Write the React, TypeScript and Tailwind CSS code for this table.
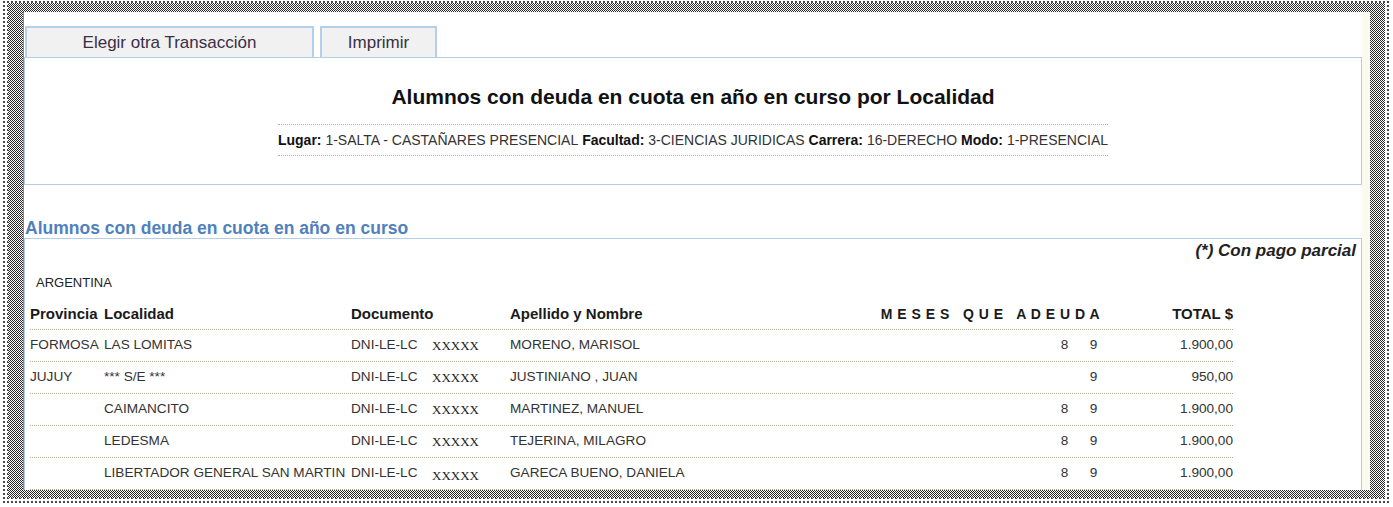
import React from 'react'

interface Row {
  prov: string
  loc: string
  name: string
  months: string[]
  total: string
  low?: boolean
}

const ROWS: Row[] = [
  { prov: 'FORMOSA', loc: 'LAS LOMITAS', name: 'MORENO, MARISOL', months: ['8', '9'], total: '1.900,00' },
  { prov: 'JUJUY', loc: '*** S/E ***', name: 'JUSTINIANO , JUAN', months: ['', '9'], total: '950,00' },
  { prov: '', loc: 'CAIMANCITO', name: 'MARTINEZ, MANUEL', months: ['8', '9'], total: '1.900,00' },
  { prov: '', loc: 'LEDESMA', name: 'TEJERINA, MILAGRO', months: ['8', '9'], total: '1.900,00' },
  { prov: '', loc: 'LIBERTADOR GENERAL SAN MARTIN', name: 'GARECA BUENO, DANIELA', months: ['8', '9'], total: '1.900,00', low: true },
]

const GRID = 'grid grid-cols-[74px_247px_81px_78px_350px_250px_123px] items-center'

const App: React.FC = () => {
  return (
    <div className="w-[1393px] h-[507px] bg-white overflow-hidden font-['Liberation_Sans',Arial,sans-serif] text-[#333]">
      {/* halftone shadow frame */}
      <div className="ml-[2px] w-[1389px] h-[504px] bg-[radial-gradient(#444_0.7px,transparent_0.9px)] bg-[length:4px_4px] pl-[6px] pt-[3px]">
        <div className="w-[1377px] h-[495px] bg-[repeating-conic-gradient(#262626_0_25%,#fff_0_50%)] bg-[length:2px_2px] pl-[15px] pt-[9px] pr-[15px] pb-[8px]">
          <div className="flex h-full bg-white border-l border-[#8c8c8c]">
            <div className="w-[1338px] flex flex-col">
              {/* action tabs */}
              <div className="flex gap-[6px] pl-[1px] mt-[14px]">
                <button className="w-[289px] h-[31px] bg-[#f1f1f1] border-2 border-b-0 border-[#b3cfea] text-[17px] text-[#3a2f45] font-['Liberation_Sans',Arial,sans-serif]">
                  Elegir otra Transacción
                </button>
                <button className="w-[117px] h-[31px] bg-[#f1f1f1] border-2 border-b-0 border-[#b3cfea] text-[17px] text-[#3a2f45] font-['Liberation_Sans',Arial,sans-serif]">
                  Imprimir
                </button>
              </div>

              {/* report header */}
              <div className="h-[129px] border border-[#b4cde8] flex flex-col items-center">
                <h1 className="mt-[27px] text-[21px] leading-[24px] font-bold text-[#111]">
                  Alumnos con deuda en cuota en año en curso por Localidad
                </h1>
                <div className="mt-[15px] h-[32px] flex items-center border-y border-dotted border-[#b0b08c] text-[14px] text-[#333] whitespace-nowrap">
                  <b className="text-[#111]">Lugar:</b>&nbsp;1-SALTA - CASTAÑARES PRESENCIAL&nbsp;
                  <b className="text-[#111]">Facultad:</b>&nbsp;3-CIENCIAS JURIDICAS&nbsp;
                  <b className="text-[#111]">Carrera:</b>&nbsp;16-DERECHO&nbsp;
                  <b className="text-[#111]">Modo:</b>&nbsp;1-PRESENCIAL
                </div>
              </div>

              {/* section */}
              <h2 className="mt-[33px] text-[17.5px] leading-[20px] font-bold text-[#4f81bd] pl-[1px]">
                Alumnos con deuda en cuota en año en curso
              </h2>
              <div className="flex-1 border-t border-x border-[#b4cde8] flex flex-col">
                <p className="text-right pr-[5px] pt-[2px] text-[17px] leading-[20px] font-bold italic text-[#222]">
                  (*) Con pago parcial
                </p>
                <p className="mt-[14px] pl-[11px] text-[13px] leading-[16px] text-[#222]">ARGENTINA</p>

                <div className="mt-[8px] ml-[5px] w-[1203px]">
                  <div className={`${GRID} h-[31px] border-b border-dotted border-[#b0b08c] text-[15px] font-bold text-[#1a1a1a]`}>
                    <span>Provincia</span>
                    <span>Localidad</span>
                    <span className="col-span-2">Documento</span>
                    <span>Apellido y Nombre</span>
                    <span className="text-right pr-[10px] whitespace-pre text-[14px] tracking-[0.5px]">M E S E S   Q U E   A D E U D A</span>
                    <span className="text-right">TOTAL $</span>
                  </div>

                  {ROWS.map((r, i) => (
                    <div key={i} className={`${GRID} h-[32px] border-b border-dotted border-[#b0b08c] text-[13.6px] text-[#333]`}>
                      <span>{r.prov}</span>
                      <span className="whitespace-nowrap">{r.loc}</span>
                      <span>DNI-LE-LC</span>
                      <span className={`font-['Liberation_Serif',serif] text-[13px] text-[#222] ${r.low ? 'pt-[4px]' : ''}`}>XXXXX</span>
                      <span>{r.name}</span>
                      <span className="flex justify-end pr-[2px]">
                        {r.months.map((m, j) => (
                          <span key={j} className="w-[29px] text-center">{m}</span>
                        ))}
                      </span>
                      <span className="text-right">{r.total}</span>
                    </div>
                  ))}
                </div>
              </div>
            </div>
            <div className="w-[8px] bg-[#fafaee]" />
          </div>
        </div>
      </div>
    </div>
  )
}

export default App
